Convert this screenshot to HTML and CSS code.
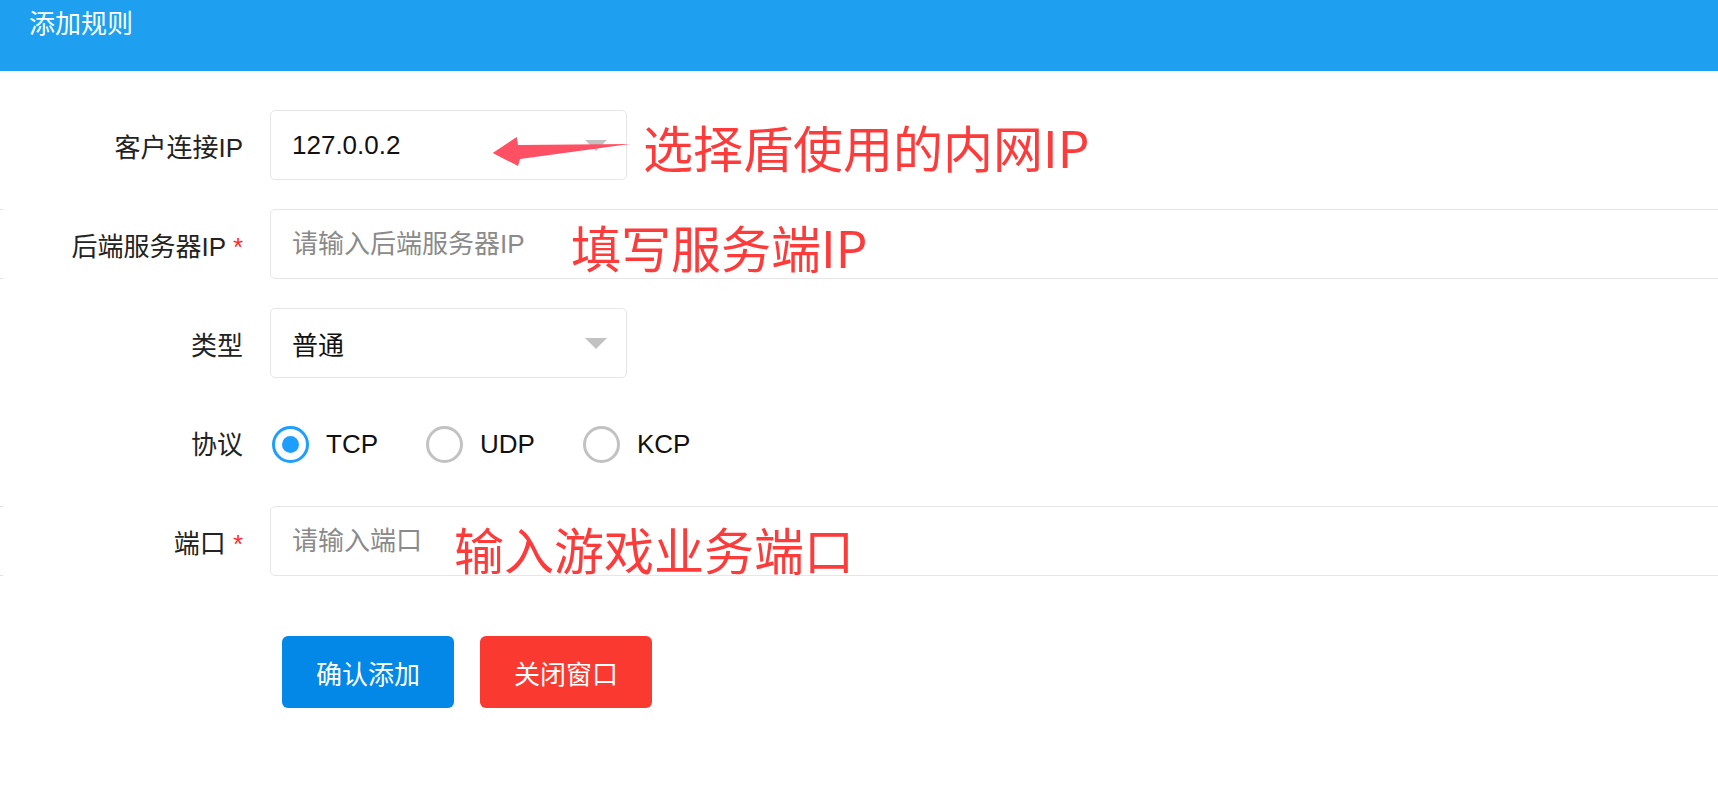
FILE: index.html
```html
<!DOCTYPE html>
<html lang="zh-CN">
<head>
  <meta charset="UTF-8" />
  <meta name="viewport" content="width=device-width, initial-scale=1.0" />
  <title>添加规则</title>
  <link rel="stylesheet" href="styles.css">
</head>
<body>

  <div class="layer">
    <div class="layer-title">添加规则</div>

    <!-- formulario -->
    <form class="rule-form">
      <div class="form-item">
        <label class="form-label">客户连接IP</label>
        <div class="select-box">
          <span class="select-value">127.0.0.2</span>
          <i class="select-arrow"></i>
        </div>
      </div>

      <div class="form-item wide">
        <label class="form-label">后端服务器IP <span class="req">*</span></label>
        <input type="text" class="text-input" placeholder="请输入后端服务器IP" />
      </div>

      <div class="form-item">
        <label class="form-label">类型</label>
        <div class="select-box">
          <span class="select-value">普通</span>
          <i class="select-arrow"></i>
        </div>
      </div>

      <div class="form-item">
        <label class="form-label">协议</label>
        <div class="radio-group">
          <span class="radio checked"><i class="radio-icon"></i>TCP</span>
          <span class="radio"><i class="radio-icon"></i>UDP</span>
          <span class="radio"><i class="radio-icon"></i>KCP</span>
        </div>
      </div>

      <div class="form-item wide">
        <label class="form-label">端口 <span class="req">*</span></label>
        <input type="text" class="text-input" placeholder="请输入端口" />
      </div>

      <div class="form-buttons">
        <button type="button" class="btn btn-blue">确认添加</button>
        <button type="button" class="btn btn-red">关闭窗口</button>
      </div>
    </form>

    <!-- anotacoes em vermelho -->
    <svg class="note-arrow" width="145" height="36" viewBox="0 0 145 36">
      <polygon points="2.7,19 26.7,3 28,11 140,10 30,25 28,32" fill="#ff5064" />
    </svg>
    <span class="note note-1">选择盾使用的内网IP</span>
    <span class="note note-2">填写服务端IP</span>
    <span class="note note-3">输入游戏业务端口</span>
  </div>

</body>
</html>
```

FILE: styles.css
```css
body {
  margin: 0;
  background-color: #fff;
  font-family: "Liberation Sans", "Noto Sans CJK SC", sans-serif;
  overflow: hidden;
}
.layer {
  position: relative;
  min-height: 787px;
}
.layer-title {
  height: 71px;
  background-color: #1e9ff0;
  color: #fff;
  font-size: 26px;
  line-height: 48px;
  padding-left: 29px;
}
.rule-form {
  padding-top: 39px;
}
.form-item {
  position: relative;
  display: flex;
  align-items: center;
  height: 70px;
  margin-bottom: 29px;
}
/* tracinho cinza na borda esquerda */
.form-item.wide::before {
  content: "";
  position: absolute;
  left: 0;
  top: 0;
  width: 3px;
  height: 68px;
  border-top: 1px solid #e2e2e2;
  border-bottom: 1px solid #e2e2e2;
}
.form-label {
  flex-shrink: 0;
  width: 270px;
  box-sizing: border-box;
  padding-right: 27px;
  text-align: right;
  font-size: 26px;
  color: #222;
}
.req {
  color: #ff2a2a;
}
.select-box,
.text-input {
  flex-shrink: 0;
  height: 70px;
  box-sizing: border-box;
  border: 1px solid #e6e6e6;
  border-radius: 5px;
  padding-left: 21px;
  font-size: 26px;
  font-family: inherit;
  color: #111;
  background-color: #fff;
}
.select-box {
  width: 357px;
  position: relative;
  display: flex;
  align-items: center;
}
.select-arrow {
  position: absolute;
  right: 19px;
  top: 29px;
  border-left: 11px solid transparent;
  border-right: 11px solid transparent;
  border-top: 11px solid #c2c2c2;
}
.text-input {
  width: 1500px;
  outline: none;
}
.text-input::placeholder {
  color: #8a8a8a;
}
.radio-group {
  display: flex;
  align-items: center;
  padding-top: 5px;
  padding-left: 2px;
}
.radio {
  display: flex;
  align-items: center;
  font-size: 26px;
  color: #111;
  margin-right: 48px;
}
.radio-icon {
  width: 37px;
  height: 37px;
  box-sizing: border-box;
  border: 3px solid #c2c2c2;
  border-radius: 50%;
  margin-right: 17px;
  display: flex;
  align-items: center;
  justify-content: center;
}
.radio.checked .radio-icon {
  border-color: #1e9fff;
}
.radio.checked .radio-icon::after {
  content: "";
  width: 17px;
  height: 17px;
  border-radius: 50%;
  background-color: #1e9fff;
}
.form-buttons {
  display: flex;
  gap: 26px;
  padding-left: 282px;
  margin-top: 60px;
}
.btn {
  height: 72px;
  padding: 0 34px;
  border: none;
  border-radius: 6px;
  color: #fff;
  font-size: 26px;
  font-family: inherit;
  cursor: pointer;
}
.btn-blue {
  background-color: #0388e8;
}
.btn-red {
  background-color: #fa3a31;
}

/* anotacoes */
.note-arrow {
  position: absolute;
  left: 490px;
  top: 134px;
}
.note {
  position: absolute;
  font-family: "Noto Sans CJK SC", sans-serif;
  font-size: 50px;
  line-height: 50px;
  color: #fd3b3b;
  white-space: nowrap;
}
.note-1 {
  left: 643px;
  top: 121px;
}
.note-2 {
  left: 571px;
  top: 221px;
}
.note-3 {
  left: 454px;
  top: 523px;
}
```
